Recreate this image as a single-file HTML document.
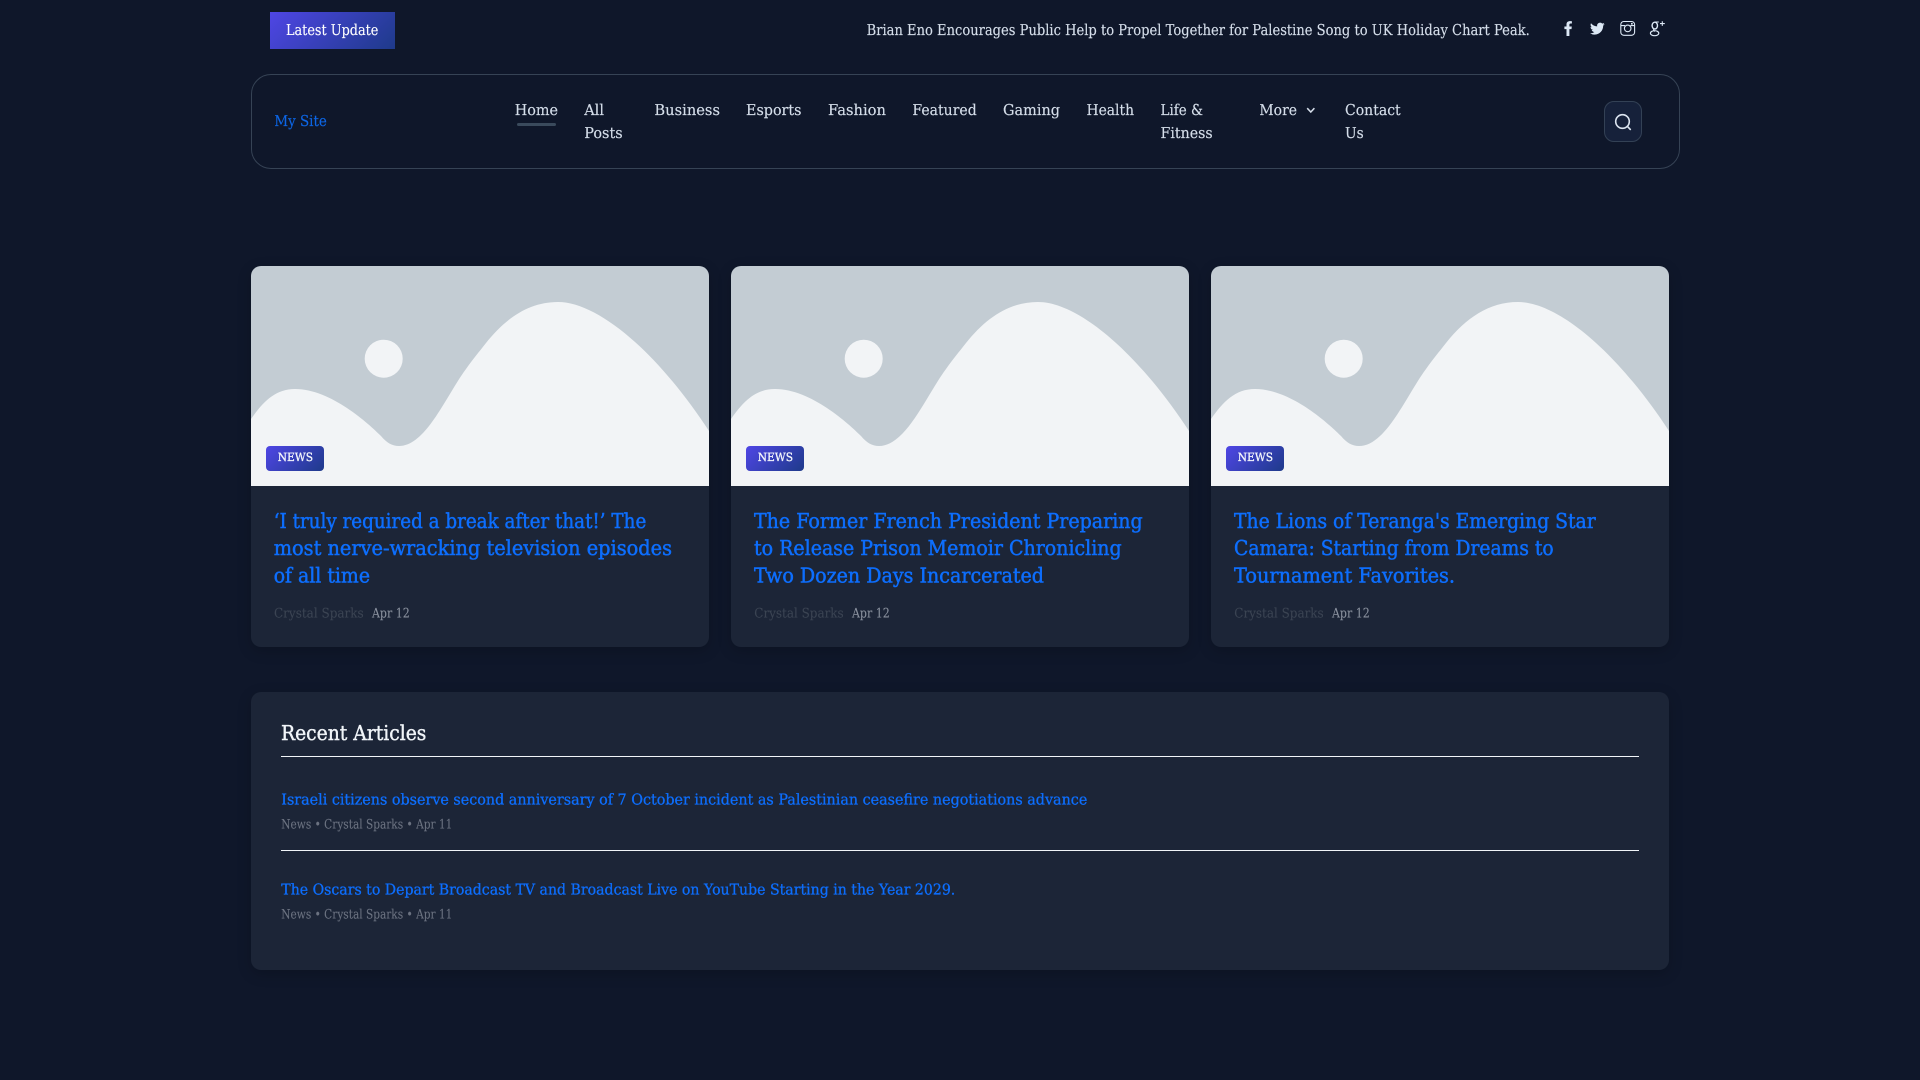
<!DOCTYPE html>
<html lang="en">
<head>
<meta charset="utf-8">
<title>My Site</title>
<style>
html,body{margin:0;padding:0;width:1920px;height:1080px;overflow:hidden;background:#0f172a;}
.abs{position:absolute;box-sizing:border-box;}
.grad{background:linear-gradient(135deg,#4f46e5,#1e3a8a);}
.card{top:266px;width:458px;height:381px;background:#1c2537;border-radius:10px;overflow:hidden;box-shadow:0 4px 14px rgba(0,0,0,.18);}
.card svg{display:block;}
.badge{top:446px;width:58px;height:25px;border-radius:4px;}
svg text{font-family:"DejaVu Serif","Liberation Serif",serif;text-rendering:geometricPrecision;}
.t{font-size:20.5px;fill:#0d6efd;stroke:#0d6efd;stroke-width:.5px;}
.n{font-size:15px;fill:#d5deea;stroke:#d5deea;stroke-width:.15px;}
.a{font-size:13.2px;fill:#3b4453;stroke:#3b4453;stroke-width:.1px;}
.d{font-size:13.2px;fill:#8a919e;stroke:#8a919e;stroke-width:.1px;}
.r{font-size:15px;fill:#0d6efd;stroke:#0d6efd;stroke-width:.3px;}
.m{font-size:13px;fill:#6b7280;stroke:#6b7280;stroke-width:.1px;}
</style>
</head>
<body>
<div class="abs grad" style="left:270px;top:12px;width:125px;height:37px;"></div>
<div class="abs" style="left:251px;top:74px;width:1429px;height:95px;border:1px solid #364355;border-radius:20px;"></div>
<div class="abs" style="left:517px;top:123px;width:39px;height:3px;border-radius:2px;background:#3a4a5c;"></div>
<div class="abs" style="left:1604px;top:101px;width:38px;height:41px;border:1px solid #334155;border-radius:10px;background:#16213a;"></div>

<div class="abs card" style="left:251px;"><svg width="458" height="220" viewBox="0 0 458 220"><rect width="458" height="220" fill="#c3ccd3"/><circle cx="132.7" cy="92.7" r="19" fill="#f2f4f6"/><path fill="#f2f4f6" d="M0,153C12,136 24,123 44,123C80,123 118,158 130,170C136,177 141,180 148,180C175,180 195,130 215,103C222,93 228,86 235,77C255,52 278,36 307,36C346,36 405,84 458,165L458,220L0,220Z"/></svg></div>
<div class="abs card" style="left:731px;"><svg width="458" height="220" viewBox="0 0 458 220"><rect width="458" height="220" fill="#c3ccd3"/><circle cx="132.7" cy="92.7" r="19" fill="#f2f4f6"/><path fill="#f2f4f6" d="M0,153C12,136 24,123 44,123C80,123 118,158 130,170C136,177 141,180 148,180C175,180 195,130 215,103C222,93 228,86 235,77C255,52 278,36 307,36C346,36 405,84 458,165L458,220L0,220Z"/></svg></div>
<div class="abs card" style="left:1211px;"><svg width="458" height="220" viewBox="0 0 458 220"><rect width="458" height="220" fill="#c3ccd3"/><circle cx="132.7" cy="92.7" r="19" fill="#f2f4f6"/><path fill="#f2f4f6" d="M0,153C12,136 24,123 44,123C80,123 118,158 130,170C136,177 141,180 148,180C175,180 195,130 215,103C222,93 228,86 235,77C255,52 278,36 307,36C346,36 405,84 458,165L458,220L0,220Z"/></svg></div>
<div class="abs badge grad" style="left:266px;"></div>
<div class="abs badge grad" style="left:746px;"></div>
<div class="abs badge grad" style="left:1226px;"></div>

<div class="abs" style="left:251px;top:692px;width:1418px;height:278px;background:#1c2537;border-radius:10px;box-shadow:0 4px 14px rgba(0,0,0,.18);"></div>
<div class="abs" style="left:281px;top:756px;width:1358px;height:1px;background:#f1f5f9;"></div>
<div class="abs" style="left:281px;top:850px;width:1358px;height:1px;background:#f1f5f9;"></div>

<svg class="abs" style="left:0;top:0;" width="1920" height="1080" viewBox="0 0 1920 1080" xmlns="http://www.w3.org/2000/svg">
<g>
<text x="286" y="35" font-size="15" fill="#fff" stroke="#fff" stroke-width=".1" textLength="92.4" lengthAdjust="spacingAndGlyphs">Latest Update</text>
<text x="866.6" y="35" font-size="15" fill="#d5deea" stroke="#d5deea" stroke-width=".15" textLength="663.2" lengthAdjust="spacingAndGlyphs">Brian Eno Encourages Public Help to Propel Together for Palestine Song to UK Holiday Chart Peak.</text>

<text x="274.4" y="126" font-size="15" fill="#0d66e6" stroke="#0d66e6" stroke-width=".15" textLength="52.4" lengthAdjust="spacingAndGlyphs">My Site</text>

<text class="n" x="514.7" y="115" textLength="43.3" lengthAdjust="spacingAndGlyphs">Home</text>
<text class="n" x="584.2" y="115" textLength="19.8" lengthAdjust="spacingAndGlyphs">All</text>
<text class="n" x="584.2" y="138" textLength="38.5" lengthAdjust="spacingAndGlyphs">Posts</text>
<text class="n" x="654.4" y="115" textLength="65.6" lengthAdjust="spacingAndGlyphs">Business</text>
<text class="n" x="746" y="115" textLength="55.5" lengthAdjust="spacingAndGlyphs">Esports</text>
<text class="n" x="828" y="115" textLength="58" lengthAdjust="spacingAndGlyphs">Fashion</text>
<text class="n" x="912.4" y="115" textLength="64.3" lengthAdjust="spacingAndGlyphs">Featured</text>
<text class="n" x="1003" y="115" textLength="57" lengthAdjust="spacingAndGlyphs">Gaming</text>
<text class="n" x="1086.5" y="115" textLength="47.5" lengthAdjust="spacingAndGlyphs">Health</text>
<text class="n" x="1160.5" y="115" textLength="42.5" lengthAdjust="spacingAndGlyphs">Life &amp;</text>
<text class="n" x="1160.5" y="138" textLength="52.2" lengthAdjust="spacingAndGlyphs">Fitness</text>
<text class="n" x="1259.4" y="115" textLength="37.6" lengthAdjust="spacingAndGlyphs">More</text>
<path d="M1307.2 108.2l3.6 3.8 3.6-3.8" fill="none" stroke="#d5deea" stroke-width="1.5"/>
<text class="n" x="1345" y="115" textLength="55.7" lengthAdjust="spacingAndGlyphs">Contact</text>
<text class="n" x="1345" y="138" textLength="18.7" lengthAdjust="spacingAndGlyphs">Us</text>

<circle cx="1622.5" cy="121.5" r="6.8" fill="none" stroke="#dbe4ef" stroke-width="1.6"/>
<path d="M1627.4 126.4l2.9 3" fill="none" stroke="#dbe4ef" stroke-width="1.6" stroke-linecap="round"/>

<path fill="#dce8f5" d="M1569.4 36v-6.9h2.1l.3-2.6h-2.4v-1.7c0-.8.2-1.3 1.3-1.3h1.2v-2.3c-.3 0-1-.1-1.9-.1-2.1 0-3.5 1.1-3.5 3.2v2.2h-2.1v2.6h2.1V36z"/>
<path fill="#dce8f5" transform="translate(1590 21.3) scale(.61)" d="M23.953 4.57a10 10 0 01-2.825.775 4.958 4.958 0 002.163-2.723c-.951.555-2.005.959-3.127 1.184a4.92 4.92 0 00-8.384 4.482C7.69 8.095 4.067 6.13 1.64 3.162a4.822 4.822 0 00-.666 2.475c0 1.71.87 3.213 2.188 4.096a4.904 4.904 0 01-2.228-.616v.06a4.923 4.923 0 003.946 4.827 4.996 4.996 0 01-2.212.085 4.936 4.936 0 004.604 3.417 9.867 9.867 0 01-6.102 2.105c-.39 0-.779-.023-1.17-.067a13.995 13.995 0 007.557 2.209c9.053 0 13.998-7.496 13.998-13.985 0-.21 0-.42-.015-.63A9.935 9.935 0 0024 4.59z"/>
<g fill="none" stroke="#dce8f5" stroke-width="1.1">
<rect x="1620.8" y="21.5" width="13.8" height="13.8" rx="3"/>
<circle cx="1627.7" cy="28.4" r="3.3"/>
<path d="M1621 25.6h4M1630.4 25.6h4"/>
<rect x="1631" y="22.9" width="1.7" height="1.7" fill="#dce8f5" stroke="none"/>
</g>
<g fill="none" stroke="#dce8f5">
<ellipse cx="1654.8" cy="25.6" rx="2.7" ry="3.4" stroke-width="1.4"/>
<ellipse cx="1654.6" cy="33.2" rx="4.2" ry="2.5" stroke-width="1.2"/>
<path d="M1654 29.2c-1 1-.2 1.5 1 2.2M1654.5 22h4.3" stroke-width="1.1"/>
<path d="M1662.3 21.3v4.6M1660 23.6h4.8" stroke-width="1.1"/>
</g>

<text x="277.7" y="461" font-size="11.5" fill="#f4f6fb" stroke="#f4f6fb" stroke-width=".3" textLength="35.3" lengthAdjust="spacingAndGlyphs">NEWS</text>
<text x="757.7" y="461" font-size="11.5" fill="#f4f6fb" stroke="#f4f6fb" stroke-width=".3" textLength="35.3" lengthAdjust="spacingAndGlyphs">NEWS</text>
<text x="1237.7" y="461" font-size="11.5" fill="#f4f6fb" stroke="#f4f6fb" stroke-width=".3" textLength="35.3" lengthAdjust="spacingAndGlyphs">NEWS</text>

<text class="t" x="273.7" y="527.8" textLength="372.6" lengthAdjust="spacingAndGlyphs">‘I truly required a break after that!’ The</text>
<text class="t" x="273.7" y="555" textLength="398.3" lengthAdjust="spacingAndGlyphs">most nerve-wracking television episodes</text>
<text class="t" x="273.7" y="582.6" textLength="96.3" lengthAdjust="spacingAndGlyphs">of all time</text>
<text class="a" x="274" y="617.6" textLength="89.7" lengthAdjust="spacingAndGlyphs">Crystal Sparks</text>
<text class="d" x="372" y="617.6" textLength="37.7" lengthAdjust="spacingAndGlyphs">Apr 12</text>

<text class="t" x="754" y="527.8" textLength="388.7" lengthAdjust="spacingAndGlyphs">The Former French President Preparing</text>
<text class="t" x="754" y="555" textLength="367.7" lengthAdjust="spacingAndGlyphs">to Release Prison Memoir Chronicling</text>
<text class="t" x="754" y="582.6" textLength="290" lengthAdjust="spacingAndGlyphs">Two Dozen Days Incarcerated</text>
<text class="a" x="754.3" y="617.6" textLength="89.4" lengthAdjust="spacingAndGlyphs">Crystal Sparks</text>
<text class="d" x="852" y="617.6" textLength="37.7" lengthAdjust="spacingAndGlyphs">Apr 12</text>

<text class="t" x="1234" y="527.8" textLength="361.7" lengthAdjust="spacingAndGlyphs">The Lions of Teranga's Emerging Star</text>
<text class="t" x="1234" y="555" textLength="319.7" lengthAdjust="spacingAndGlyphs">Camara: Starting from Dreams to</text>
<text class="t" x="1234" y="582.6" textLength="221" lengthAdjust="spacingAndGlyphs">Tournament Favorites.</text>
<text class="a" x="1234.3" y="617.6" textLength="89.4" lengthAdjust="spacingAndGlyphs">Crystal Sparks</text>
<text class="d" x="1332" y="617.6" textLength="37.7" lengthAdjust="spacingAndGlyphs">Apr 12</text>

<text x="281" y="739.8" font-size="20.5" fill="#f1f5f9" stroke="#f1f5f9" stroke-width=".4" textLength="145.4" lengthAdjust="spacingAndGlyphs">Recent Articles</text>

<text class="r" x="281.3" y="804.7" textLength="806" lengthAdjust="spacingAndGlyphs">Israeli citizens observe second anniversary of 7 October incident as Palestinian ceasefire negotiations advance</text>
<text class="m" x="281.3" y="828.6" textLength="171" lengthAdjust="spacingAndGlyphs">News • Crystal Sparks • Apr 11</text>
<text class="r" x="281.3" y="894.7" textLength="674" lengthAdjust="spacingAndGlyphs">The Oscars to Depart Broadcast TV and Broadcast Live on YouTube Starting in the Year 2029.</text>
<text class="m" x="281.3" y="918.6" textLength="171" lengthAdjust="spacingAndGlyphs">News • Crystal Sparks • Apr 11</text>
</g>
</svg>
</body>
</html>
